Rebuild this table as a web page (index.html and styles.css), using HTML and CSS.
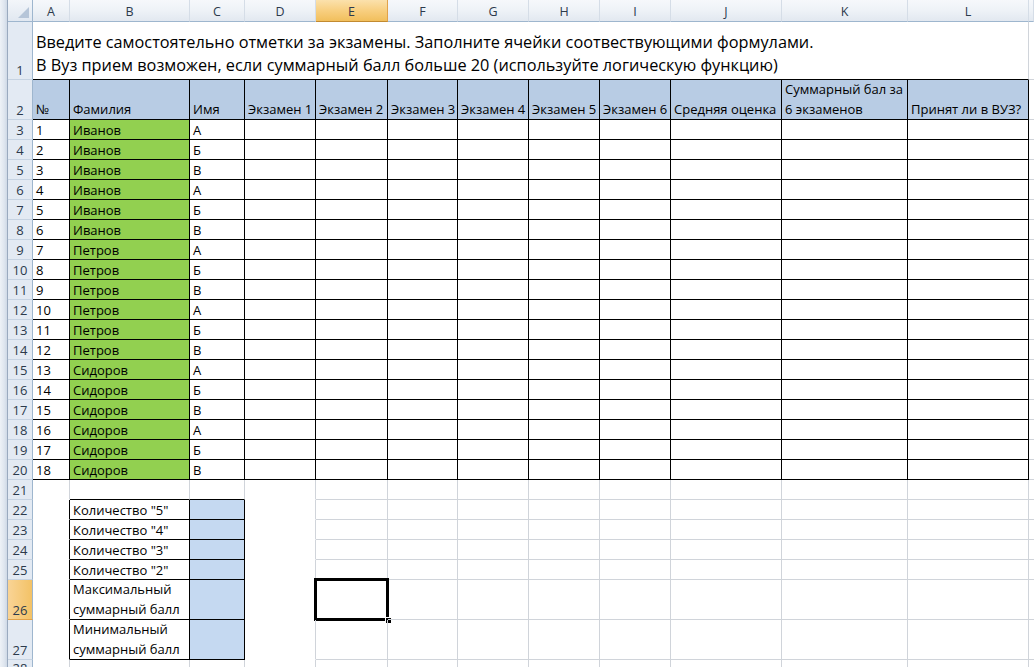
FILE: index.html
```html
<!DOCTYPE html>
<html lang="ru">
<head>
<meta charset="utf-8">
<title>Экзамены</title>
<link rel="stylesheet" href="styles.css">
</head>
<body>
<div class="sheet">
  <div class="frame"></div>
  <!-- column headers -->
  <div class="corner"><span class="tri"></span></div>
  <div class="ch">A</div><div class="ch">B</div><div class="ch">C</div><div class="ch">D</div><div class="ch act">E</div><div class="ch">F</div><div class="ch">G</div><div class="ch">H</div><div class="ch">I</div><div class="ch">J</div><div class="ch">K</div><div class="ch">L</div><div class="ch"></div>
  <!-- row 1 -->
  <div class="rh">1</div>
  <div class="c title">Введите самостоятельно отметки за экзамены. Заполните ячейки соотвествующими формулами.<br>В Вуз прием возможен, если суммарный балл больше 20 (используйте логическую функцию)</div>
  <div class="c m"></div>
  <!-- row 2 -->
  <div class="rh">2</div>
  <div class="c t hd">№</div><div class="c t hd">Фамилия</div><div class="c t hd">Имя</div><div class="c t hd">Экзамен 1</div><div class="c t hd">Экзамен 2</div><div class="c t hd">Экзамен 3</div><div class="c t hd">Экзамен 4</div><div class="c t hd">Экзамен 5</div><div class="c t hd">Экзамен 6</div><div class="c t hd">Средняя оценка</div><div class="c t hd">Суммарный бал за<br>6 экзаменов</div><div class="c t hd">Принят ли в ВУЗ?</div>
  <div class="c m"></div>
  <!-- rows 3-20 -->
  <div class="rh">3</div><div class="c t">1</div><div class="c t gr">Иванов</div><div class="c t">А</div><div class="c t"></div><div class="c t"></div><div class="c t"></div><div class="c t"></div><div class="c t"></div><div class="c t"></div><div class="c t"></div><div class="c t"></div><div class="c t"></div><div class="c m"></div>
  <div class="rh">4</div><div class="c t">2</div><div class="c t gr">Иванов</div><div class="c t">Б</div><div class="c t"></div><div class="c t"></div><div class="c t"></div><div class="c t"></div><div class="c t"></div><div class="c t"></div><div class="c t"></div><div class="c t"></div><div class="c t"></div><div class="c m"></div>
  <div class="rh">5</div><div class="c t">3</div><div class="c t gr">Иванов</div><div class="c t">В</div><div class="c t"></div><div class="c t"></div><div class="c t"></div><div class="c t"></div><div class="c t"></div><div class="c t"></div><div class="c t"></div><div class="c t"></div><div class="c t"></div><div class="c m"></div>
  <div class="rh">6</div><div class="c t">4</div><div class="c t gr">Иванов</div><div class="c t">А</div><div class="c t"></div><div class="c t"></div><div class="c t"></div><div class="c t"></div><div class="c t"></div><div class="c t"></div><div class="c t"></div><div class="c t"></div><div class="c t"></div><div class="c m"></div>
  <div class="rh">7</div><div class="c t">5</div><div class="c t gr">Иванов</div><div class="c t">Б</div><div class="c t"></div><div class="c t"></div><div class="c t"></div><div class="c t"></div><div class="c t"></div><div class="c t"></div><div class="c t"></div><div class="c t"></div><div class="c t"></div><div class="c m"></div>
  <div class="rh">8</div><div class="c t">6</div><div class="c t gr">Иванов</div><div class="c t">В</div><div class="c t"></div><div class="c t"></div><div class="c t"></div><div class="c t"></div><div class="c t"></div><div class="c t"></div><div class="c t"></div><div class="c t"></div><div class="c t"></div><div class="c m"></div>
  <div class="rh">9</div><div class="c t">7</div><div class="c t gr">Петров</div><div class="c t">А</div><div class="c t"></div><div class="c t"></div><div class="c t"></div><div class="c t"></div><div class="c t"></div><div class="c t"></div><div class="c t"></div><div class="c t"></div><div class="c t"></div><div class="c m"></div>
  <div class="rh">10</div><div class="c t">8</div><div class="c t gr">Петров</div><div class="c t">Б</div><div class="c t"></div><div class="c t"></div><div class="c t"></div><div class="c t"></div><div class="c t"></div><div class="c t"></div><div class="c t"></div><div class="c t"></div><div class="c t"></div><div class="c m"></div>
  <div class="rh">11</div><div class="c t">9</div><div class="c t gr">Петров</div><div class="c t">В</div><div class="c t"></div><div class="c t"></div><div class="c t"></div><div class="c t"></div><div class="c t"></div><div class="c t"></div><div class="c t"></div><div class="c t"></div><div class="c t"></div><div class="c m"></div>
  <div class="rh">12</div><div class="c t">10</div><div class="c t gr">Петров</div><div class="c t">А</div><div class="c t"></div><div class="c t"></div><div class="c t"></div><div class="c t"></div><div class="c t"></div><div class="c t"></div><div class="c t"></div><div class="c t"></div><div class="c t"></div><div class="c m"></div>
  <div class="rh">13</div><div class="c t">11</div><div class="c t gr">Петров</div><div class="c t">Б</div><div class="c t"></div><div class="c t"></div><div class="c t"></div><div class="c t"></div><div class="c t"></div><div class="c t"></div><div class="c t"></div><div class="c t"></div><div class="c t"></div><div class="c m"></div>
  <div class="rh">14</div><div class="c t">12</div><div class="c t gr">Петров</div><div class="c t">В</div><div class="c t"></div><div class="c t"></div><div class="c t"></div><div class="c t"></div><div class="c t"></div><div class="c t"></div><div class="c t"></div><div class="c t"></div><div class="c t"></div><div class="c m"></div>
  <div class="rh">15</div><div class="c t">13</div><div class="c t gr">Сидоров</div><div class="c t">А</div><div class="c t"></div><div class="c t"></div><div class="c t"></div><div class="c t"></div><div class="c t"></div><div class="c t"></div><div class="c t"></div><div class="c t"></div><div class="c t"></div><div class="c m"></div>
  <div class="rh">16</div><div class="c t">14</div><div class="c t gr">Сидоров</div><div class="c t">Б</div><div class="c t"></div><div class="c t"></div><div class="c t"></div><div class="c t"></div><div class="c t"></div><div class="c t"></div><div class="c t"></div><div class="c t"></div><div class="c t"></div><div class="c m"></div>
  <div class="rh">17</div><div class="c t">15</div><div class="c t gr">Сидоров</div><div class="c t">В</div><div class="c t"></div><div class="c t"></div><div class="c t"></div><div class="c t"></div><div class="c t"></div><div class="c t"></div><div class="c t"></div><div class="c t"></div><div class="c t"></div><div class="c m"></div>
  <div class="rh">18</div><div class="c t">16</div><div class="c t gr">Сидоров</div><div class="c t">А</div><div class="c t"></div><div class="c t"></div><div class="c t"></div><div class="c t"></div><div class="c t"></div><div class="c t"></div><div class="c t"></div><div class="c t"></div><div class="c t"></div><div class="c m"></div>
  <div class="rh">19</div><div class="c t">17</div><div class="c t gr">Сидоров</div><div class="c t">Б</div><div class="c t"></div><div class="c t"></div><div class="c t"></div><div class="c t"></div><div class="c t"></div><div class="c t"></div><div class="c t"></div><div class="c t"></div><div class="c t"></div><div class="c m"></div>
  <div class="rh">20</div><div class="c t">18</div><div class="c t gr">Сидоров</div><div class="c t">В</div><div class="c t"></div><div class="c t"></div><div class="c t"></div><div class="c t"></div><div class="c t"></div><div class="c t"></div><div class="c t"></div><div class="c t"></div><div class="c t"></div><div class="c m"></div>
  <!-- row 21 -->
  <div class="rh">21</div><div class="c nb"></div><div class="c bb"></div><div class="c bb"></div><div class="c nb"></div><div class="c"></div><div class="c"></div><div class="c"></div><div class="c"></div><div class="c"></div><div class="c"></div><div class="c"></div><div class="c"></div><div class="c m"></div>
  <!-- rows 22-27 -->
  <div class="rh">22</div><div class="c nb rk"></div><div class="c t">Количество "5"</div><div class="c t bl"></div><div class="c nb"></div><div class="c"></div><div class="c"></div><div class="c"></div><div class="c"></div><div class="c"></div><div class="c"></div><div class="c"></div><div class="c"></div><div class="c m"></div>
  <div class="rh">23</div><div class="c nb rk"></div><div class="c t">Количество "4"</div><div class="c t bl"></div><div class="c nb"></div><div class="c"></div><div class="c"></div><div class="c"></div><div class="c"></div><div class="c"></div><div class="c"></div><div class="c"></div><div class="c"></div><div class="c m"></div>
  <div class="rh">24</div><div class="c nb rk"></div><div class="c t">Количество "3"</div><div class="c t bl"></div><div class="c nb"></div><div class="c"></div><div class="c"></div><div class="c"></div><div class="c"></div><div class="c"></div><div class="c"></div><div class="c"></div><div class="c"></div><div class="c m"></div>
  <div class="rh">25</div><div class="c nb rk"></div><div class="c t">Количество "2"</div><div class="c t bl"></div><div class="c nb"></div><div class="c"></div><div class="c"></div><div class="c"></div><div class="c"></div><div class="c"></div><div class="c"></div><div class="c"></div><div class="c"></div><div class="c m"></div>
  <div class="rh act">26</div><div class="c nb rk"></div><div class="c t two">Максимальный<br>суммарный балл</div><div class="c t bl"></div><div class="c nb"></div><div class="c selcell"><span class="sel"></span><span class="handle"></span></div><div class="c"></div><div class="c"></div><div class="c"></div><div class="c"></div><div class="c"></div><div class="c"></div><div class="c"></div><div class="c m"></div>
  <div class="rh">27</div><div class="c nb rk"></div><div class="c t two">Минимальный<br>суммарный балл</div><div class="c t bl"></div><div class="c nb"></div><div class="c"></div><div class="c"></div><div class="c"></div><div class="c"></div><div class="c"></div><div class="c"></div><div class="c"></div><div class="c"></div><div class="c m"></div>
  <!-- row 28 -->
  <div class="rh">28</div><div class="c"></div><div class="c"></div><div class="c"></div><div class="c"></div><div class="c"></div><div class="c"></div><div class="c"></div><div class="c"></div><div class="c"></div><div class="c"></div><div class="c"></div><div class="c"></div><div class="c m"></div>
</div>
</body>
</html>
```
FILE: styles.css
```css
* { box-sizing: border-box; }
html, body { margin: 0; padding: 0; background: #fff; }
body { font-family: "Open Sans", "Noto Sans", sans-serif; }

.sheet {
  --grid: #d0d4da;
  width: 1034px;
  height: 667px;
  overflow: hidden;
  display: grid;
  grid-template-columns: 8px 25px 37px 120px 55px 71px 72px 70px 71px 71px 71px 111px 126px 121px 1fr;
  grid-template-rows: 22px 58px 40px repeat(23, 20px) 40px 40px 1fr;
  background: #fff;
}

.frame {
  grid-column: 1;
  grid-row: 1 / -1;
  background: linear-gradient(90deg, #eef2f7 0, #dfe6ef 60%, #cfd9e6 100%);
  border-right: 1px solid #9aaabf;
}

.corner {
  position: relative;
  background: linear-gradient(#f3f6fa, #e1e8f1);
  border-right: 1px solid #9eb6ce;
  border-bottom: 1px solid #9eb6ce;
}
.tri {
  position: absolute;
  right: 3px;
  bottom: 3px;
  width: 0;
  height: 0;
  border-left: 11px solid transparent;
  border-bottom: 11px solid #b6c5d8;
}

.ch {
  display: flex;
  align-items: center;
  justify-content: center;
  padding-top: 1px;
  font-size: 12.5px;
  color: #2c3a4c;
  background: linear-gradient(#f6f8fb 0, #eef2f7 50%, #e2e8f0 100%);
  border-right: 1px solid #d5dde7;
  border-bottom: 1px solid #9eb6ce;
}
.ch.act {
  background: linear-gradient(#fbe1ac 0, #f8cf80 50%, #f1bf5c 100%);
  border-right-color: #e1a24a;
  border-bottom-color: #c28a30;
}

.rh {
  grid-column: 2;
  display: flex;
  align-items: flex-end;
  justify-content: center;
  padding-bottom: 0;
  line-height: 17px;
  font-size: 13px;
  color: #2c3a4c;
  background: #e3eaf3;
  border-right: 1px solid #9eb6ce;
  border-bottom: 1px solid #c6d3e2;
}
.rh.act {
  background: linear-gradient(90deg, #f9d496, #f3c266);
  border-bottom-color: #e1a24a;
}

.c {
  position: relative;
  display: flex;
  align-items: flex-end;
  padding: 0 2px 0 3px;
  font-size: 13px;
  line-height: 18px;
  color: #000;
  white-space: nowrap;
  border-right: 1px solid var(--grid);
  border-bottom: 1px solid var(--grid);
}
.c.m { border-right: none; }
.c.t { border-color: #000; }
.c.nb { border-bottom-color: transparent; }
.c.bb { border-bottom-color: #000; }
.c.rk { border-right-color: #000; }

.c.title {
  grid-column: span 12;
  display: block;
  padding-top: 9px;
  font-size: 16.3px;
  line-height: 23px;
  border-bottom-color: #000;
}

.c.hd { background: #b8cce4; line-height: 20px; }
.c.two { line-height: 20px; padding-bottom: 0; }
.c.gr { background: #92d050; }
.c.bl { background: #c5d9f1; }

.sel {
  position: absolute;
  left: -2px;
  top: -2px;
  right: -2px;
  bottom: -2px;
  border: 3px solid #000;
}
.handle {
  position: absolute;
  right: -5px;
  bottom: -5px;
  width: 7px;
  height: 7px;
  background: #000;
  border: 1px solid #fff;
}
```
